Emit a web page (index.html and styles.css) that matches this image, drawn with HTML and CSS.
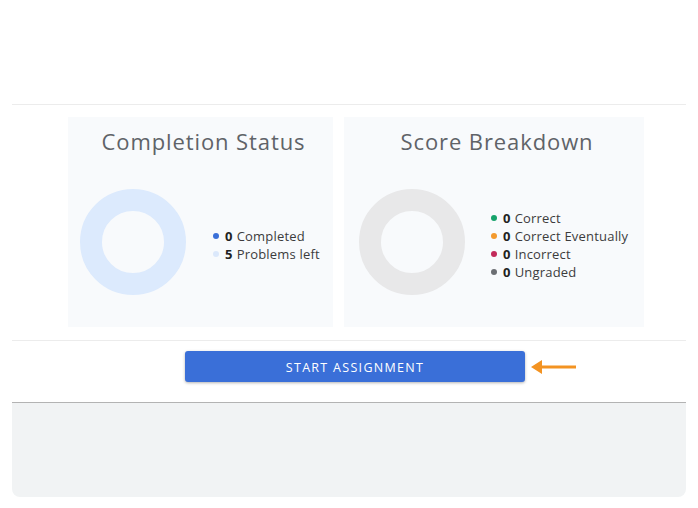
FILE: index.html
```html
<!DOCTYPE html>
<html>
<head>
<meta charset="utf-8">
<link rel="stylesheet" href="styles.css">
</head>
<body>
<div class="page">
  <div class="summary">
    <div class="cards">
      <div class="card card-completion">
        <h2 class="card-title">Completion Status</h2>
        <div class="card-body">
          <div class="donut donut-blue"></div>
          <ul class="legend">
            <li><span class="dot dot-blue"></span><b>0</b> Completed</li>
            <li><span class="dot dot-light"></span><b>5</b> Problems left</li>
          </ul>
        </div>
      </div>
      <div class="card card-score">
        <h2 class="card-title">Score Breakdown</h2>
        <div class="card-body">
          <div class="donut donut-gray"></div>
          <ul class="legend">
            <li><span class="dot dot-green"></span><b>0</b> Correct</li>
            <li><span class="dot dot-orange"></span><b>0</b> Correct Eventually</li>
            <li><span class="dot dot-red"></span><b>0</b> Incorrect</li>
            <li><span class="dot dot-gray"></span><b>0</b> Ungraded</li>
          </ul>
        </div>
      </div>
    </div>
  </div>
  <div class="actions">
    <button class="start-btn">START ASSIGNMENT</button>
    <svg class="pointer" width="48" height="16" viewBox="0 0 48 16">
      <path d="M0 8 L11 1 L11 6.5 L45 6.5 L45 9.5 L11 9.5 L11 15 Z" fill="#f39322"/>
    </svg>
  </div>
  <div class="footer-panel"></div>
</div>
</body>
</html>
```
FILE: styles.css
```css
* { box-sizing: border-box; }
html, body { margin: 0; padding: 0; background: #ffffff; }
body { font-family: "Open Sans", "Liberation Sans", sans-serif; color: #333; }

.page { padding: 104px 12px 0; }

.summary { border-top: 1px solid #ececec; padding: 12px 0 13px 56px; }
.cards { display: flex; gap: 11px; }
.card {
  background: #f8fafc;
  height: 210px;
  display: flex;
  flex-direction: column;
}
.card-completion { width: 265px; }
.card-score { width: 300px; }
.card-title {
  margin: 0;
  padding: 10px 0 0 6px;
  text-align: center;
  font-weight: 400;
  font-size: 22px;
  letter-spacing: 0.9px;
  line-height: 28px;
  color: #5f6368;
}
.card-body {
  display: flex;
  align-items: center;
  padding-top: 34px;
}
.card-completion .card-body { padding-left: 12px; }
.card-score .card-body { padding-left: 15px; }
.donut {
  width: 106px;
  height: 106px;
  border-radius: 50%;
  border: 22px solid #dbeafe;
  flex: none;
}
.donut-blue { border-color: #dceafd; }
.donut-gray { border-color: #e8e8e9; }
.legend {
  list-style: none;
  margin: 6px 0 0 27px;
  padding: 0;
  font-size: 13px;
  letter-spacing: 0.2px;
  line-height: 18px;
  color: #3c3c3c;
}
.card-score .legend { margin-left: 26px; }
.legend li { display: flex; align-items: center; white-space: nowrap; }
.legend b { font-weight: 700; color: #222; margin-right: 4px; }
.dot { width: 6px; height: 6px; border-radius: 50%; margin-right: 6px; flex: none; }
.dot-blue { background: #3a6fd8; }
.dot-light { background: #dbe8fb; }
.dot-green { background: #16a36b; }
.dot-orange { background: #f39a2e; }
.dot-red { background: #c22a5a; }
.dot-gray { background: #6b6e73; }

.actions {
  border-top: 1px solid #ececec;
  display: flex;
  align-items: center;
  padding: 10px 0 20px 173px;
}
.start-btn {
  width: 340px;
  height: 31px;
  border: none;
  border-radius: 3px;
  background: #3a6fd8;
  color: #ffffff;
  font-family: "Open Sans", "Liberation Sans", sans-serif;
  font-size: 12.5px;
  letter-spacing: 1.3px;
  padding-top: 2px;
  box-shadow: 0 1px 3px rgba(0,0,0,0.3);
}
.pointer { margin-left: 6px; display: block; }

.footer-panel {
  height: 95px;
  background: #f1f3f4;
  border-top: 1px solid #b3b3b3;
  border-radius: 0 0 8px 8px;
}
```
